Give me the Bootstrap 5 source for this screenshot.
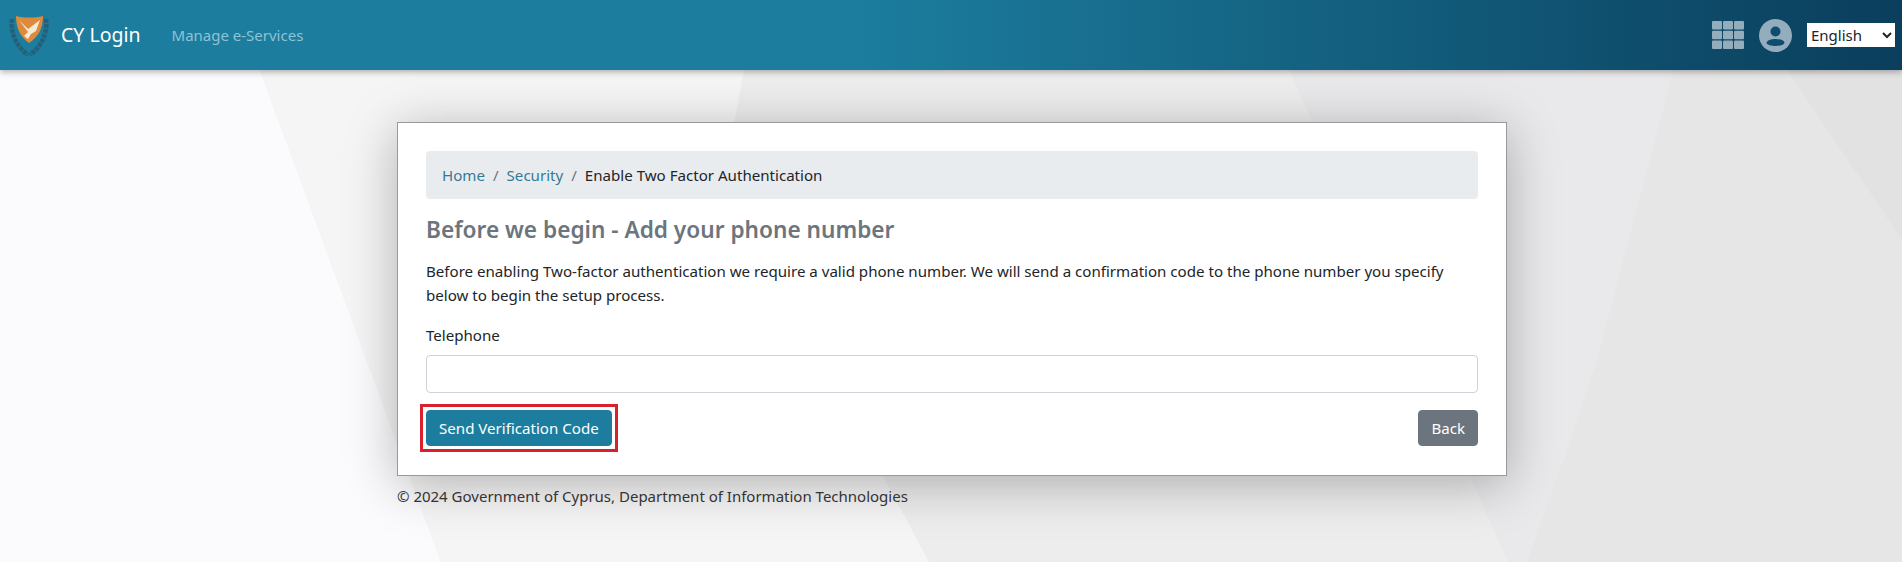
<!DOCTYPE html>
<html lang="en">
  <head>
    <meta charset="UTF-8" />
    <meta name="viewport" content="width=device-width, initial-scale=1.0" />
    <title>Enable Two Factor Authentication</title>
    <link
      href="https://cdn.jsdelivr.net/npm/bootstrap@5.3.0/dist/css/bootstrap.min.css"
      rel="stylesheet"
    />
    <style>
      html, body {
        height: 562px;
        overflow: hidden;
      }
      body {
        font-family: "Noto Sans", sans-serif;
        font-size: 15.1px;
        color: #212529;
        background-color: #e6e6e6;
        background-repeat: no-repeat;
        background-image: url("data:image/svg+xml,%3Csvg xmlns='http://www.w3.org/2000/svg' width='1902' height='562'%3E%3Crect width='1902' height='562' fill='%23ededee'/%3E%3Cpolygon points='0,0 234,0 441,562 0,562' fill='%23fbfbfd'/%3E%3Cpolygon points='234,0 757,0 720,200 883,476 929,562 441,562' fill='%23f5f5f6'/%3E%3Cpolygon points='1258,0 1508,562 1527,562 1563,460 1597,360 1623,260 1692,0' fill='%23e9e9eb'/%3E%3Cpolygon points='1692,0 1623,260 1597,360 1563,460 1527,562 1902,562 1902,0' fill='%23e6e6e6'/%3E%3Cpolygon points='1787,70 1902,240 1902,0 1740,0' fill='%23e2e2e2'/%3E%3C/svg%3E");
      }
      .top-bar {
        height: 70px;
        padding: 0 7px 0 9px;
        background: linear-gradient(90deg, #1c7d9e 0, #1c7d9e 45%, #0a3e5c 100%);
        box-shadow: 0 2px 6px rgba(0, 0, 0, .3);
      }
      .brand-name {
        color: #fff;
        font-size: 19.5px;
        margin-left: 12px;
      }
      .top-link {
        color: #8ec3d6;
        font-size: 15px;
        margin-left: 31px;
        text-decoration: none;
      }
      .icon-gap {
        gap: 15px;
      }
      .lang-select {
        width: 88px;
        height: 24px;
        font-size: 15px;
        padding-left: 0;
        border: 0;
        background: #fff;
        color: #212529;
      }
      .page-box {
        width: 1110px;
        margin: 52px 0 0 397px;
      }
      .main-panel {
        padding: 28px 28px 29px;
        background: #fff;
        border: 1px solid #999;
        box-shadow: 0 8px 48px rgba(0, 0, 0, .28);
      }
      .crumbs {
        height: 48px;
        padding: 0 16px;
        margin-bottom: 16px;
        background: #e9ecef;
        border-radius: 4px;
      }
      .crumbs a {
        color: #337a96;
        text-decoration: none;
      }
      .main-title {
        color: #6c757d;
        font-size: 22.65px;
        font-weight: 600;
        margin-bottom: 16px;
        padding-top: 1px;
      }
      .intro-text {
        line-height: 24px;
        margin-bottom: 17px;
      }
      .field-label {
        margin-bottom: 8px;
      }
      .field-input {
        height: 38px;
        margin-bottom: 17px;
        border-color: #ced4da;
        border-radius: 4px;
      }
      .send-wrap {
        padding: 6px;
        margin: -6px;
        outline: 3px solid #d9202e;
        outline-offset: -3px;
      }
      .btn-send,
      .btn-back {
        font-size: 15.1px;
        border-radius: 4px;
      }
      .btn-send {
        background: #1c7d9e;
        border-color: #1c7d9e;
        color: #fff;
      }
      .copy-text {
        margin-top: 9px;
        font-size: 15px;
        color: #333;
      }
    </style>
  </head>
  <body>
    <header class="top-bar d-flex align-items-center">
      <svg width="40" height="42" viewBox="0 0 40 42">
        <path d="M3 5 C1 18 7 32 19 41 M37 5 C39 18 33 32 21 41" fill="none" stroke="#25607a" stroke-width="4.500" stroke-dasharray="4 1" />
        <path d="M7 2 C14 4 26 4 34 2 C34 15 29 23 20 29 C12 23 7 15 7 2 Z" fill="#dd8a3b" />
        <path d="M10 6 L19 15 L31 6 L27 17 L22 20 L19 25 L15 22 L19 18 Z" fill="#f5ead8" />
      </svg>
      <span class="brand-name">CY Login</span>
      <a class="top-link" href="#">Manage e-Services</a>
      <div class="ms-auto d-flex align-items-center icon-gap">
        <svg width="32" height="28" viewBox="0 0 32 28" fill="#93adbc">
          <rect x="0" y="0" width="10" height="8.500" rx="1" />
          <rect x="11" y="0" width="10" height="8.500" rx="1" />
          <rect x="22" y="0" width="10" height="8.500" rx="1" />
          <rect x="0" y="9.750" width="10" height="8.500" rx="1" />
          <rect x="11" y="9.750" width="10" height="8.500" rx="1" />
          <rect x="22" y="9.750" width="10" height="8.500" rx="1" />
          <rect x="0" y="19.500" width="10" height="8.500" rx="1" />
          <rect x="11" y="19.500" width="10" height="8.500" rx="1" />
          <rect x="22" y="19.500" width="10" height="8.500" rx="1" />
        </svg>
        <svg width="33" height="33" viewBox="0 0 33 33">
          <circle cx="16.500" cy="16.500" r="16.500" fill="#93adbc" />
          <circle cx="16.500" cy="12.500" r="5" fill="#0f4c6d" />
          <path d="M7.500 24 C8 18.500 25 18.500 25.500 24 C24 28 9 28 7.500 24 Z" fill="#0f4c6d" />
        </svg>
        <select class="lang-select"><option>English</option></select>
      </div>
    </header>
    <main class="page-box">
      <div class="main-panel">
        <div class="crumbs d-flex align-items-center">
          <a href="#">Home</a><span class="text-secondary mx-2">/</span>
          <a href="#">Security</a><span class="text-secondary mx-2">/</span>
          <span>Enable Two Factor Authentication</span>
        </div>
        <h1 class="main-title">Before we begin - Add your phone number</h1>
        <p class="intro-text">Before enabling Two-factor authentication we require a valid phone number. We will send a confirmation code to the phone number you specify below to begin the setup process.</p>
        <label class="form-label field-label" for="phone">Telephone</label>
        <input class="form-control field-input" id="phone" type="text" />
        <div class="d-flex justify-content-between align-items-center">
          <div class="send-wrap"><button class="btn btn-send" type="button">Send Verification Code</button></div>
          <a class="btn btn-secondary btn-back" href="#">Back</a>
        </div>
      </div>
      <div class="copy-text">© 2024 Government of Cyprus, Department of Information Technologies</div>
    </main>
    <script src="https://cdn.jsdelivr.net/npm/bootstrap@5.3.0/dist/js/bootstrap.bundle.min.js"></script>
  </body>
</html>
